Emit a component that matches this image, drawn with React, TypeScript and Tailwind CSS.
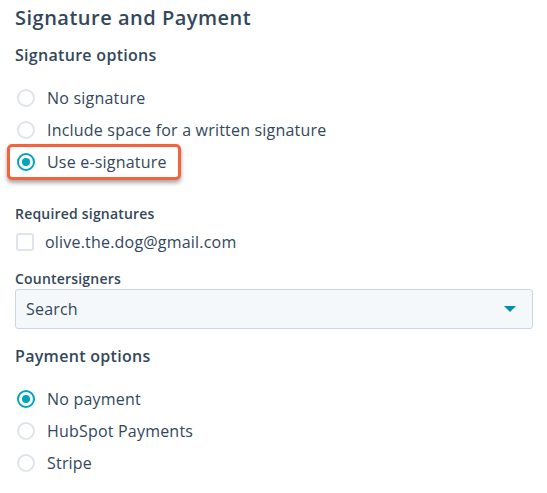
import React from 'react';

function Radio({ checked }: { checked?: boolean }) {
  return checked ? (
    <span className="flex h-[18px] w-[18px] shrink-0 items-center justify-center rounded-full border-2 border-[#00a4bd] bg-white">
      <span className="h-[8px] w-[8px] rounded-full bg-[#00a4bd]" />
    </span>
  ) : (
    <span className="h-[18px] w-[18px] shrink-0 rounded-full border-2 border-[#dfe3eb] bg-white" />
  );
}

function RadioRow({ label, checked }: { label: string; checked?: boolean }) {
  return (
    <div className="flex h-[32px] items-center gap-[12px] pl-[17px]">
      <Radio checked={checked} />
      <span className="text-[16px] tracking-[0.2px] text-[#33475b]">{label}</span>
    </div>
  );
}

export default function App() {
  return (
    <div
      className="min-h-screen w-[547px] bg-white px-[15px] pt-[4px] text-[#33475b]"
      style={{ fontFamily: '"Open Sans", sans-serif' }}
    >
      <h1 className="text-[20px] font-semibold leading-[28px] tracking-[0.5px]">Signature and Payment</h1>

      <h2 className="mt-[12px] text-[16px] font-semibold leading-[22px] tracking-[0.3px]">Signature options</h2>

      <div className="mt-[16px] -ml-[15px] flex flex-col">
        <RadioRow label="No signature" />
        <RadioRow label="Include space for a written signature" />
        {/* highlighted option */}
        <div className="-mt-[2px] ml-[7px] w-[174px] rounded-[5px] border-[3px] border-[#f5623b] bg-white shadow-[0_3px_4px_rgba(0,0,0,0.35)]">
          <div className="-ml-[10px] flex h-[30px] items-center gap-[12px] pl-[17px]">
            <Radio checked />
            <span className="text-[16px] tracking-[0.2px] text-[#33475b]">Use e-signature</span>
          </div>
        </div>
      </div>

      <div className="mt-[24px] text-[14px] font-semibold leading-[20px] tracking-[0.2px]">Required signatures</div>
      <div className="mt-[6px] flex h-[24px] items-center gap-[11px] pl-[1px]">
        <span className="h-[18px] w-[18px] rounded-[3px] border-2 border-[#dfe3eb] bg-white" />
        <span className="text-[16px] tracking-[0.2px]">olive.the.dog@gmail.com</span>
      </div>

      <div className="mt-[15px] text-[14px] font-semibold leading-[20px] tracking-[0.2px]">Countersigners</div>
      <div className="flex h-[40px] w-[518px] items-center justify-between rounded-[3px] border border-[#cbd6e2] bg-[#f5f8fa] pl-[10px] pr-[16px]">
        <span className="text-[16px] tracking-[0.2px]">Search</span>
        <svg width="12" height="6" viewBox="0 0 12 6">
          <path d="M0 0h12L6 6z" fill="#0091ae" />
        </svg>
      </div>

      <h2 className="mt-[16px] text-[16px] font-semibold leading-[22px] tracking-[0.3px]">Payment options</h2>

      <div className="mt-[16px] -ml-[15px] flex flex-col">
        <RadioRow label="No payment" checked />
        <RadioRow label="HubSpot Payments" />
        <RadioRow label="Stripe" />
      </div>
    </div>
  );
}
